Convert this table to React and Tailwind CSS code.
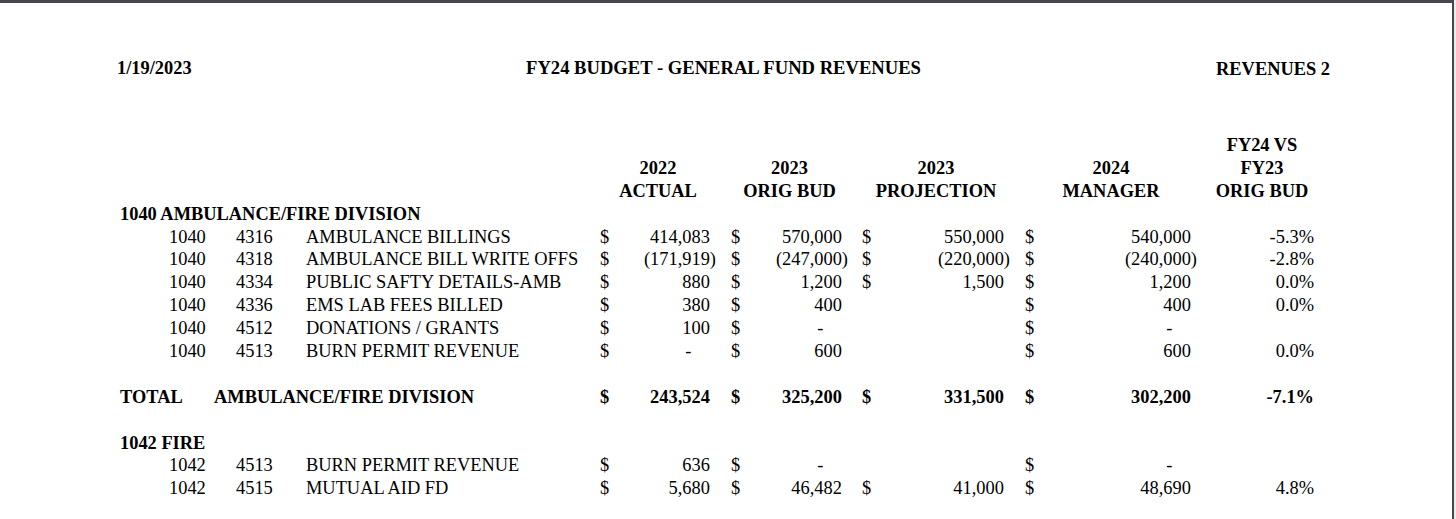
import React from 'react';

const rows1040 = [
  ['1040', '4316', 'AMBULANCE BILLINGS', '414,083', '570,000', '550,000', '540,000', '-5.3%'],
  ['1040', '4318', 'AMBULANCE BILL WRITE OFFS', '(171,919)', '(247,000)', '(220,000)', '(240,000)', '-2.8%'],
  ['1040', '4334', 'PUBLIC SAFTY DETAILS-AMB', '880', '1,200', '1,500', '1,200', '0.0%'],
  ['1040', '4336', 'EMS LAB FEES BILLED', '380', '400', null, '400', '0.0%'],
  ['1040', '4512', 'DONATIONS / GRANTS', '100', '-', null, '-', ''],
  ['1040', '4513', 'BURN PERMIT REVENUE', '-', '600', null, '600', '0.0%'],
];

const rows1042 = [
  ['1042', '4513', 'BURN PERMIT REVENUE', '636', '-', null, '-', ''],
  ['1042', '4515', 'MUTUAL AID FD', '5,680', '46,482', '41,000', '48,690', '4.8%'],
];

// accounting style: $ at left, figure right, room kept for ")"
const Money = ({ v, className }) => {
  if (v == null) return <div className={className}></div>;
  const pad = v.startsWith('(') ? '' : v === '-' ? 'pr-[1.333em]' : 'pr-[0.333em]';
  return (
    <div className={`flex justify-between ${className}`}>
      <span>$</span>
      <span className={pad}>{v}</span>
    </div>
  );
};

const MoneyCells = ({ vals }) => (
  <>
    <Money v={vals[0]} className="w-[116px]" />
    <Money v={vals[1]} className="ml-[15px] w-[117px]" />
    <Money v={vals[2]} className="ml-[14px] w-[148px]" />
    <Money v={vals[3]} className="ml-[15px] w-[172px]" />
    <div className="ml-[13px] w-[104px] text-right">{vals[4]}</div>
  </>
);

const LineRow = ({ r }) => (
  <div className="flex h-[22.9px] items-center">
    <div className="w-[49px]"></div>
    <div className="w-[67px]">{r[0]}</div>
    <div className="w-[70px]">{r[1]}</div>
    <div className="w-[294px]">{r[2]}</div>
    <MoneyCells vals={r.slice(3)} />
  </div>
);

export default function App() {
  return (
    <div className="w-[1456px] h-[519px] bg-[#ececec] overflow-hidden">
      <div className="w-[1454px] h-[519px] bg-white border-t-[3px] border-r-[2px] border-[#47474d] text-black font-['Liberation_Serif','Times_New_Roman',serif] text-[18.4px] leading-[22.9px]">
        <div className="grid grid-cols-[1fr_auto_1fr] items-center pl-[117px] pr-[122px] pt-[53px] font-bold">
          <div>1/19/2023</div>
          <div className="text-[18.6px]">FY24 BUDGET - GENERAL FUND REVENUES</div>
          <div className="text-right pt-[2px]">REVENUES 2</div>
        </div>

        <div className="ml-[120px] mt-[53px]">
          <div className="flex items-end font-bold">
            <div className="w-[480px]"></div>
            <div className="w-[116px] text-center">2022<br />ACTUAL</div>
            <div className="ml-[15px] w-[117px] text-center">2023<br />ORIG BUD</div>
            <div className="ml-[14px] w-[148px] text-center">2023<br />PROJECTION</div>
            <div className="ml-[15px] w-[172px] text-center">2024<br />MANAGER</div>
            <div className="ml-[13px] w-[104px] text-center">FY24 VS<br />FY23<br />ORIG BUD</div>
          </div>

          <div className="h-[22.9px] font-bold">1040 AMBULANCE/FIRE DIVISION</div>
          {rows1040.map((r, i) => <LineRow key={i} r={r} />)}

          <div className="h-[22.9px]"></div>
          <div className="flex h-[22.9px] items-center font-bold">
            <div className="w-[94px]">TOTAL</div>
            <div className="w-[386px]">AMBULANCE/FIRE DIVISION</div>
            <MoneyCells vals={['243,524', '325,200', '331,500', '302,200', '-7.1%']} />
          </div>
          <div className="h-[22.9px]"></div>

          <div className="h-[22.9px] font-bold">1042 FIRE</div>
          {rows1042.map((r, i) => <LineRow key={i} r={r} />)}
        </div>
      </div>
    </div>
  );
}
